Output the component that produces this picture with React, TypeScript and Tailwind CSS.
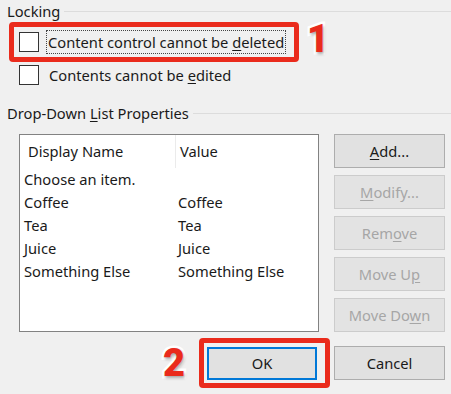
import React from "react"

const font = { fontFamily: '"Noto Sans", "Open Sans", sans-serif' }

const U = ({ children }: { children: React.ReactNode }) => (
  <span className="underline underline-offset-2 decoration-1">{children}</span>
)

const Checkbox = () => (
  <div className="w-[20px] h-[20px] border border-[#333333] bg-white shrink-0" />
)

const Callout = ({ n }: { n: string }) => (
  <span
    className="font-black text-[38px] leading-none text-[#ea2b1c] [-webkit-text-stroke:5px_#ffffff] [paint-order:stroke_fill] [text-shadow:1px_2px_3px_rgba(0,0,0,0.35)]"
    style={{ fontFamily: 'Roboto, "Liberation Sans", Arial, sans-serif' }}
  >
    {n}
  </span>
)

const SideButton = ({ children, disabled }: { children: React.ReactNode; disabled?: boolean }) => (
  <div
    className={
      disabled
        ? "h-[34px] flex items-center justify-center bg-[#e3e3e3] border border-[#cccccc] text-[#a6a6a6]"
        : "h-[34px] flex items-center justify-center bg-[#e1e1e1] border border-[#adadad] text-[#1a1a1a]"
    }
  >
    <span>{children}</span>
  </div>
)

const rows = [
  ["Choose an item.", ""],
  ["Coffee", "Coffee"],
  ["Tea", "Tea"],
  ["Juice", "Juice"],
  ["Something Else", "Something Else"],
]

export default function App() {
  return (
    <div className="w-[451px] h-[394px] bg-[#f0f0f0] text-[#1a1a1a] text-[14.7px] overflow-hidden" style={font}>
      {/* Locking */}
      <div className="flex items-center gap-[4px] pl-[7px] h-[22px]">
        <span className="leading-none">Locking</span>
        <div className="flex-1 h-px bg-[#dcdcdc]" />
      </div>

      <div className="flex items-center">
        <div className="ml-[9px] w-[290px] h-[40px] border-[5px] border-[#ea2b1c] rounded-[4px] flex items-center pl-[5px] gap-[7px]">
          <Checkbox />
          <div className="border border-dotted border-[#444444] px-[1px] h-[24px] flex items-center">
            <span>
              Content control cannot be <U>d</U>eleted
            </span>
          </div>
        </div>
        <div className="ml-[8px] -mt-[6px]">
          <Callout n="1" />
        </div>
      </div>

      <div className="flex items-center gap-[10px] pl-[19px] mt-[3px] h-[20px]">
        <Checkbox />
        <span>
          Contents cannot be <U>e</U>dited
        </span>
      </div>

      {/* Drop-Down List Properties */}
      <div className="flex items-center gap-[4px] pl-[7px] mt-[19px] h-[18px]">
        <span className="leading-none">
          Drop-Down <U>L</U>ist Properties
        </span>
        <div className="flex-1 h-px bg-[#dcdcdc]" />
      </div>

      <div className="flex mt-[12px] pl-[19px] gap-[15px]">
        <div className="w-[300px] h-[198px] bg-white border border-[#828282]">
          <div className="flex h-[33px]">
            <div className="w-[156px] pl-[8px] flex items-center border-r border-[#ebebeb]">Display Name</div>
            <div className="pl-[4px] flex items-center">Value</div>
          </div>
          {rows.map(([a, b]) => (
            <div key={a} className="flex h-[23px] items-center">
              <div className="w-[158px] pl-[4px]">{a}</div>
              <div>{b}</div>
            </div>
          ))}
        </div>
        <div className="w-[111px] flex flex-col gap-[7px]">
          <SideButton>
            <U>A</U>dd...
          </SideButton>
          <SideButton disabled>
            <U>M</U>odify...
          </SideButton>
          <SideButton disabled>
            Rem<U>o</U>ve
          </SideButton>
          <SideButton disabled>
            Move U<U>p</U>
          </SideButton>
          <SideButton disabled>
            Move Do<U>w</U>n
          </SideButton>
        </div>
      </div>

      <div className="flex items-center justify-end pr-[6px] mt-[6px]">
        <Callout n="2" />
        <div className="ml-[14px] w-[131px] h-[50px] border-[5px] border-[#ea2b1c] rounded-[4px] pl-[3px] pt-[4px]">
          <div className="w-[110px] h-[33px] bg-[#e1e1e1] border-2 border-[#0078d7] flex items-center justify-center">
            OK
          </div>
        </div>
        <div className="ml-[4px] w-[111px] h-[34px] bg-[#e1e1e1] border border-[#adadad] flex items-center justify-center">
          Cancel
        </div>
      </div>
    </div>
  )
}
